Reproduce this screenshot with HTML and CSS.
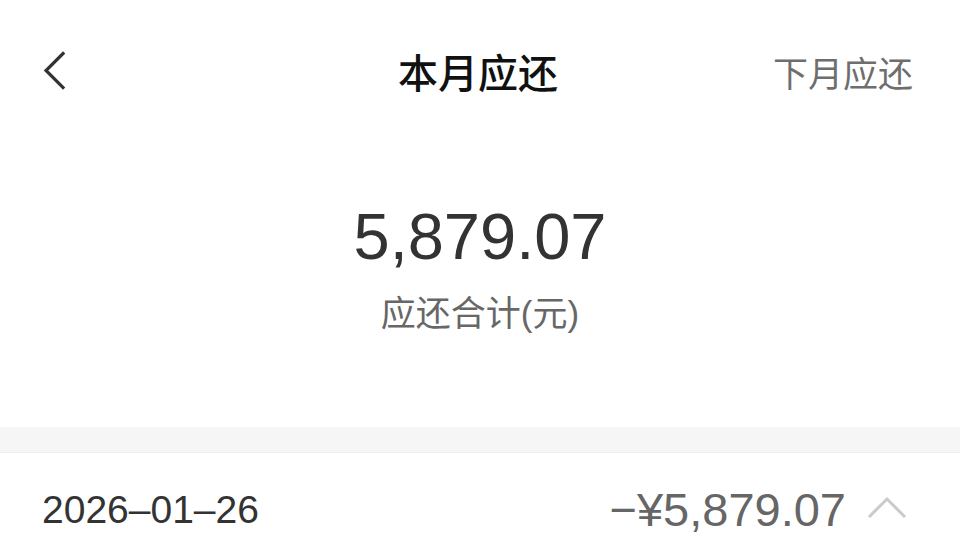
FILE: index.html
```html
<!DOCTYPE html>
<html lang="zh-CN">
<head>
<meta charset="utf-8">
<title>本月应还</title>
<link rel="stylesheet" href="styles.css">
</head>
<body>
<div class="page">
  <header class="nav">
    <span class="back" aria-label="返回">
      <svg width="24" height="40" viewBox="0 0 24 40"><polyline points="20,2.5 3,19.5 20,36.5" fill="none" stroke="#333" stroke-width="3.2" stroke-linecap="square" stroke-linejoin="miter"/></svg>
    </span>
    <h1 class="title">本月应还</h1>
    <span class="next">下月应还</span>
  </header>
  <section class="hero">
    <div class="total">5,879.07</div>
    <div class="total-label">应还合计(元)</div>
  </section>
  <div class="band"></div>
  <div class="row">
    <span class="date">2026–01–26</span>
    <span class="row-right">
      <span class="row-amount">−¥5,879.07</span>
      <svg class="up" width="40" height="24" viewBox="0 0 40 24"><polyline points="2,22 20,4 38,22" fill="none" stroke="#cbcbcb" stroke-width="3"/></svg>
    </span>
  </div>
</div>
</body>
</html>
```
FILE: styles.css
```css
html, body {
  margin: 0;
  padding: 0;
  background: #fff;
}
body {
  font-family: "Liberation Sans", "Noto Sans CJK SC", sans-serif;
  width: 960px;
  height: 560px;
  overflow: hidden;
}
.page {
  display: flex;
  flex-direction: column;
}
.nav {
  height: 142px;
  display: grid;
  grid-template-columns: 1fr auto 1fr;
  align-items: center;
  padding: 0 47px 0 43px;
}
.back {
  display: flex;
  align-items: center;
  justify-self: start;
}
.back svg {
  display: block;
}
.title {
  margin: 0;
  font-family: "Noto Sans CJK SC", sans-serif;
  font-size: 40px;
  line-height: 1;
  font-weight: 500;
  color: #111;
}
.next {
  justify-self: end;
  font-family: "Noto Sans CJK SC", sans-serif;
  font-size: 35px;
  line-height: 1;
  color: #6e6e6e;
}
.hero {
  height: 285px;
  box-sizing: border-box;
  padding-top: 62px;
  display: flex;
  flex-direction: column;
  align-items: center;
}
.total {
  font-size: 65px;
  line-height: 1;
  color: #333;
}
.total-label {
  margin-top: 27px;
  font-size: 35px;
  line-height: 1;
  color: #676767;
}
.band {
  height: 25px;
  background: #f6f6f6;
  border-bottom: 1px solid #eeeeee;
}
.row {
  height: 112px;
  display: flex;
  align-items: center;
  justify-content: space-between;
  padding: 0 53px 0 42px;
}
.date {
  font-size: 39px;
  line-height: 1;
  color: #333;
}
.row-right {
  display: flex;
  align-items: center;
  gap: 21px;
}
.row-amount {
  font-size: 47px;
  line-height: 1;
  color: #666;
}
.up {
  display: block;
  margin-top: -4px;
}
```
